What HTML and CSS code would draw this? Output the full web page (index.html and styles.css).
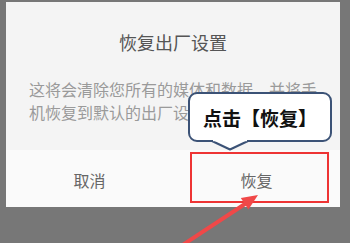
FILE: index.html
```html
<!DOCTYPE html>
<html lang="zh">
<head>
    <meta charset="UTF-8">
    <meta name="viewport" content="width=device-width, initial-scale=1.0">
    <title>恢复出厂设置</title>
    <link rel="stylesheet" href="styles.css">
</head>
<body>
    <div class="dialog">
        <div class="content">
            <div class="title">恢复出厂设置</div>
            <div class="message">这将会清除您所有的媒体和数据，并将手机恢复到默认的出厂设置。</div>
        </div>
        <div class="buttons">
            <div class="button">取消</div>
            <div class="button">恢复</div>
        </div>
    </div>

    <div class="highlight"></div>
    <div class="callout">
        点击【恢复】
        <svg class="tail" width="40" height="12" viewBox="0 0 40 12">
            <polyline points="2,1 20,9.5 38,1" fill="#fff" stroke="#3b5276" stroke-width="2" stroke-linejoin="round"/>
            <rect x="3" y="0" width="34" height="1.2" fill="#fff"/>
        </svg>
    </div>
    <svg class="arrow" width="350" height="243" viewBox="0 0 350 243">
        <line x1="172" y1="252" x2="248" y2="202" stroke="#f04848" stroke-width="4"/>
        <polygon points="258,195 248.4,209.6 240.8,198" fill="#f04848"/>
    </svg>
</body>
</html>
```

FILE: styles.css
```css
body {
    margin: 0;
    width: 350px;
    height: 243px;
    overflow: hidden;
    background: #777777;
    font-family: "Noto Sans CJK SC", "Noto Sans", sans-serif;
}
.dialog {
    margin: 2px 0 0 6px;
    width: 334px;
    background: #fafafa;
}
.content {
    padding: 28px 22px 26px;
    background: #f4f4f4;
}
.title {
    font-size: 18px;
    line-height: 24px;
    color: #555;
    text-align: center;
    margin-bottom: 24px;
}
.message {
    font-size: 16px;
    line-height: 23px;
    color: #9a9a9a;
    padding-left: 1px;
}
.buttons {
    display: flex;
    height: 57px;
}
.button {
    flex: 1;
    display: flex;
    align-items: center;
    justify-content: center;
    font-size: 16px;
    color: #666;
    padding-top: 3px;
    box-sizing: border-box;
}
.highlight {
    position: absolute;
    left: 190px;
    top: 152px;
    width: 139px;
    height: 51px;
    box-sizing: border-box;
    border: 2.5px solid #ee3434;
}
.callout {
    position: absolute;
    left: 188px;
    top: 92px;
    width: 144px;
    height: 50px;
    box-sizing: border-box;
    border: 2px solid #3b5276;
    border-radius: 9px;
    background: #fff;
    display: flex;
    align-items: center;
    justify-content: center;
    font-size: 19px;
    font-weight: bold;
    color: #111;
    padding-top: 1px;
}
.tail {
    position: absolute;
    left: 20px;
    top: 46px;
}
.arrow {
    position: absolute;
    left: 0;
    top: 0;
}
```
